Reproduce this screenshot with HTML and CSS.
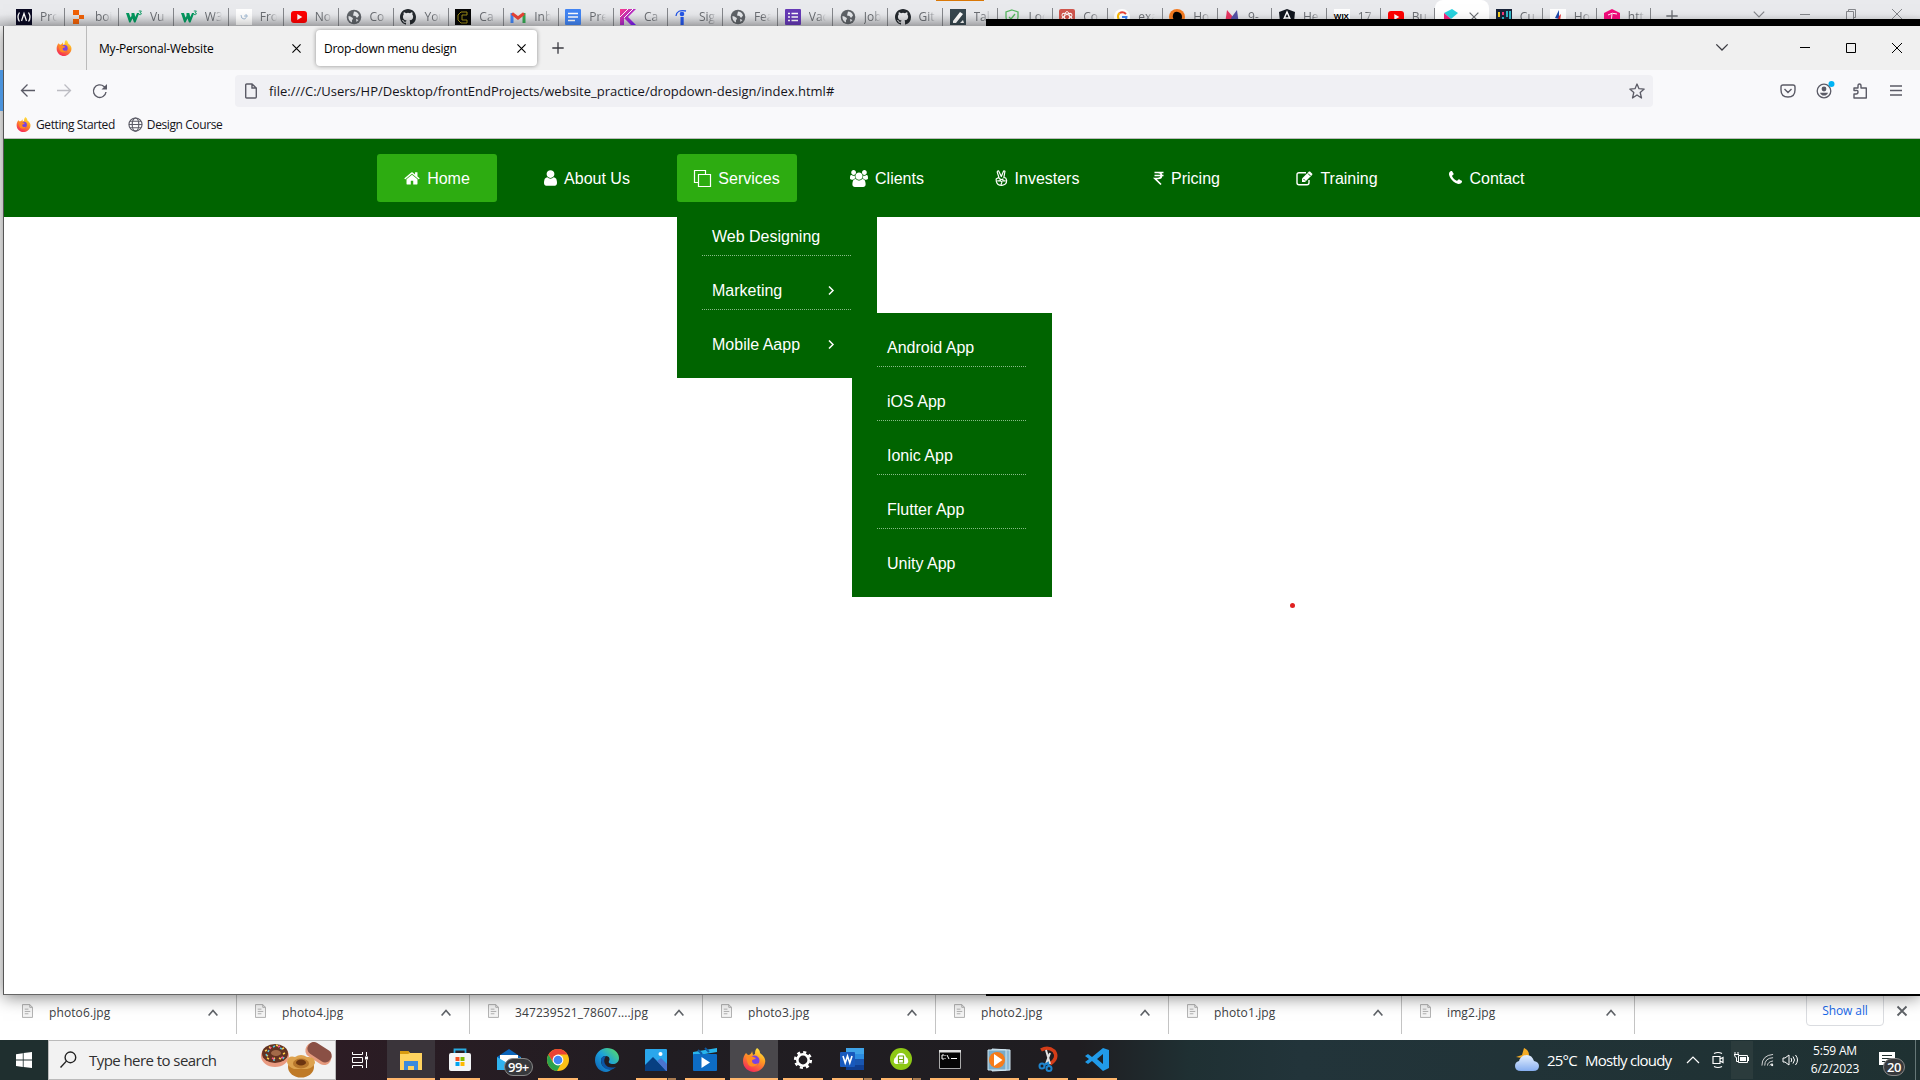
FILE: index.html
```html
<!DOCTYPE html>
<html lang="en">
<head>
<meta charset="utf-8">
<title>Drop-down menu design</title>
<link rel="stylesheet" href="styles.css">
</head>
<body>
<svg class="defs" aria-hidden="true">
  <defs>
    <linearGradient id="flame" x1="0.8" y1="0" x2="0.3" y2="1"><stop offset="0" stop-color="#fff04a"/><stop offset=".4" stop-color="#ffa020"/><stop offset="1" stop-color="#f5245a"/></linearGradient>
    <linearGradient id="edgeg" x1="0" y1="1" x2="1" y2="0"><stop offset="0" stop-color="#0c5cb0"/><stop offset=".5" stop-color="#1ba0dc"/><stop offset="1" stop-color="#5fe35c"/></linearGradient>
    <linearGradient id="kg" x1="0" y1="0" x2="1" y2="1"><stop offset="0" stop-color="#ff3d8a"/><stop offset="1" stop-color="#6a1bff"/></linearGradient>
    <linearGradient id="cloudg" x1="0" y1="0" x2="0" y2="1"><stop offset="0" stop-color="#e6f1ff"/><stop offset="1" stop-color="#86aef0"/></linearGradient>
    <symbol id="firefox" viewBox="0 0 24 24"><path d="M15 0c3 2 3 4 3 5 4 3 6 6 5 10-1 5-6 9-11 9S1 20 1 13c0-3 1-6 3-8l2 2c2 0 4-2 4-4l1 4 2-1c0-2 0-4 2-6z" fill="url(#flame)"/><circle cx="12.500" cy="12.500" r="5" fill="#7a42e0"/><path d="M4 9c4-3 7 0 10 1-1 2-4 1-4 3 0 3 4 4 6 2-1 4-8 5-10 1-1-2-1-4-2-7z" fill="#ff8a22"/></symbol>
    <symbol id="globe" viewBox="0 0 16 16"><circle cx="8" cy="8" r="7.300" fill="#5f6368"/><path d="M2.500 7C4 7 5 8 6 8.500c1.500.5 1 2 0 2.500v2.500C3.500 12.500 2 10 2.500 7zM8 2.500c2 0 4.500 1.500 5 4L11 9 9.500 7 7 6.500zm2 7.500 2.500 1-2 2z" fill="#e8eaed"/></symbol>
    <symbol id="github" viewBox="0 0 16 16"><path fill="#24292e" d="M8 0C3.580 0 0 3.580 0 8c0 3.540 2.290 6.530 5.470 7.590.4.070.55-.17.55-.38v-1.490c-2.010.37-2.530-.49-2.690-.94-.09-.23-.48-.94-.82-1.130-.28-.15-.68-.52-.01-.53.63-.01 1.080.58 1.230.82.72 1.210 1.870.87 2.330.66.07-.52.28-.87.51-1.070-1.780-.2-3.640-.89-3.640-3.950 0-.87.31-1.590.82-2.150-.08-.2-.36-1.020.08-2.120 0 0 .67-.21 2.200.82a7.600 7.600 0 0 1 4 0c1.530-1.040 2.200-.82 2.200-.82.44 1.100.16 1.920.08 2.120.51.560.82 1.270.82 2.150 0 3.070-1.870 3.750-3.650 3.950.29.25.54.73.54 1.480v2.190c0 .21.15.46.55.38A8 8 0 0 0 16 8c0-4.420-3.580-8-8-8z"/></symbol>
    <symbol id="youtube" viewBox="0 0 16 16"><rect y="2" width="16" height="12" rx="3" fill="#f00"/><path d="M6.300 5v6l5-3z" fill="#fff"/></symbol>
    <symbol id="w3" viewBox="0 0 16 16"><path d="M0 4h3l1.500 4.500L5.500 7V4h2.800l1 4L11 4h2.300L9.500 13.500H8L6.500 9.500l-2 4H3.200z" fill="#04995f"/><path d="M12.800 2h2.600l-1.300 1.800q1.600 0 1.200 1.300-.8 1-2.300.4" fill="none" stroke="#04995f" stroke-width=".9"/></symbol>
    <symbol id="x" viewBox="0 0 16 16"><path d="m3 3 10 10M13 3 3 13" fill="none" stroke="currentColor" stroke-width="1.400"/></symbol>
    <symbol id="plus" viewBox="0 0 16 16"><path d="M8 1.500v13M1.500 8h13" fill="none" stroke="currentColor" stroke-width="1.500"/></symbol>
    <symbol id="down" viewBox="0 0 16 16"><path d="m1.500 5 6.500 6.500L14.500 5" fill="none" stroke="currentColor" stroke-width="1.500"/></symbol>
    <symbol id="up" viewBox="0 0 16 16"><path d="m1 12 7-8 7 8" fill="none" stroke="currentColor" stroke-width="2.600"/></symbol>
    <symbol id="file" viewBox="0 0 12 15"><path d="M.5.5h8l3 3v11H.5z" fill="#f5f5f5" stroke="#aaa"/><path d="M8.500.5v3h3M3 5.500h4M3 8h6M3 10.500h4" fill="none" stroke="#aaa"/></symbol>
  </defs>
</svg>

<header class="back-tabs">
  <div class="tab"><svg viewBox="0 0 16 16"><path d="M0 0h16v16H0z" fill="#0a0a23"/><path d="M3.500 3.500Q.5 8 3.500 12.500M12.500 3.500q3 4.500 0 9M5.500 12 8 4.500l2.500 7.500" fill="none" stroke="#fff" stroke-width="1.300"/></svg><span>Pro</span></div>
  <div class="tab"><svg viewBox="0 0 16 16"><path d="M2 1h6v5H2zM8 6h5v4H8zM2 10h6v5H2z" fill="#f26207"/></svg><span>boi</span></div>
  <div class="tab"><svg><use href="#w3"/></svg><span>Vu</span></div>
  <div class="tab"><svg><use href="#w3"/></svg><span>W3</span></div>
  <div class="tab"><svg viewBox="0 0 16 16"><path d="M0 0h16v16H0z" fill="#fff"/><path d="M5 6q0 4 3 4t2-5m-2 2h4" fill="none" stroke="#a7bfd8"/></svg><span>Fro</span></div>
  <div class="tab"><svg><use href="#youtube"/></svg><span>No</span></div>
  <div class="tab"><svg><use href="#globe"/></svg><span>Co</span></div>
  <div class="tab"><svg><use href="#github"/></svg><span>You</span></div>
  <div class="tab"><svg viewBox="0 0 16 16"><path d="M0 0h16v16H0z" fill="#070707"/><path d="M12 5V3H6L3 6v5l3 3h6v-3H7V6h5z" fill="none" stroke="#9c8a16"/></svg><span>Ca</span></div>
  <div class="tab"><svg viewBox="0 0 16 16"><path d="M2 14V4" stroke="#4285f4" stroke-width="3"/><path d="M14 14V4" stroke="#34a853" stroke-width="3"/><path d="m2 4.500 6 4.500 6-4.500" fill="none" stroke="#ea4335" stroke-width="3"/></svg><span>Inb</span></div>
  <div class="tab"><svg viewBox="0 0 16 16"><rect width="16" height="16" rx="1" fill="#4285f4"/><path d="M3 4.500h10M3 8h10M3 11.500h7" stroke="#fff" stroke-width="1.500"/></svg><span>Pre</span></div>
  <div class="tab"><svg viewBox="0 0 16 16"><path d="M0 0h16L8 8l8 8h-5L4 9v7H0z" fill="url(#kg)"/><path d="M0 8 8 0M4 9l9-9" stroke="#fff"/></svg><span>Ca</span></div>
  <div class="tab"><svg viewBox="0 0 16 16"><circle cx="7" cy="5" r="2.300" fill="#2557e8"/><path d="M5.500 8h3.200v8H5.500z" fill="#2557e8"/><path d="M1 7q1-7 10-5" fill="none" stroke="#2557e8" stroke-width="1.300"/></svg><span>Sig</span></div>
  <div class="tab"><svg><use href="#globe"/></svg><span>Fea</span></div>
  <div class="tab"><svg viewBox="0 0 16 16"><rect width="16" height="16" rx="1" fill="#673ab7"/><path d="M3 4.500h2m1.500 0H13M3 8h2m1.500 0H13M3 11.500h2m1.500 0H13" stroke="#fff" stroke-width="1.600"/></svg><span>Vac</span></div>
  <div class="tab"><svg><use href="#globe"/></svg><span>Job</span></div>
  <div class="tab"><svg><use href="#github"/></svg><span>Git</span></div>
  <div class="tab"><svg viewBox="0 0 16 16"><path d="M0 0h16v16H0z" fill="#37474f"/><path d="m3 12 7-9 3 2-7 9H3zM10 14l3-3 1 3z" fill="#fff"/></svg><span>Tal</span></div>
  <div class="tab"><svg viewBox="0 0 16 16"><path d="m8 1 6 2v5q0 5-6 8-6-3-6-8V3zM5 8l2 2 4-5" fill="none" stroke="#58b860" stroke-width="1.300"/></svg><span>Loc</span></div>
  <div class="tab"><svg viewBox="0 0 16 16"><rect width="16" height="16" rx="2" fill="#d0564d"/><g fill="none" stroke="#fff" stroke-width=".9"><ellipse cx="8" cy="8" rx="2.500" ry="5.500"/><ellipse cx="8" cy="8" rx="2.500" ry="5.500" transform="rotate(60 8 8)"/><ellipse cx="8" cy="8" rx="2.500" ry="5.500" transform="rotate(120 8 8)"/></g></svg><span>Co</span></div>
  <div class="tab"><svg viewBox="0 0 16 16"><circle cx="8" cy="8" r="8" fill="#fff"/><path d="M12 5Q9 2 5.500 4" fill="none" stroke="#ea4335" stroke-width="2"/><path d="M5.500 4Q3 6.500 4.500 10" fill="none" stroke="#fbbc05" stroke-width="2"/><path d="M4.500 10q2 4 6 2" fill="none" stroke="#34a853" stroke-width="2"/><path d="M8 8h4.500q0 3-2 4" fill="none" stroke="#4285f4" stroke-width="2"/></svg><span>exa</span></div>
  <div class="tab"><svg viewBox="0 0 16 16"><circle cx="8" cy="8" r="8" fill="#f47b20"/><path d="M4 6q1-4 5-3t4 5q0 3-3 4v4H5l1-4Q3 9 4 6z"/></svg><span>Ho</span></div>
  <div class="tab"><svg viewBox="0 0 16 16"><path d="M1 15 3 1l6 7-4 8z" fill="#e83561"/><path d="m7 9 6-8 2 15-7-2z" fill="#5551a5"/></svg><span>9-</span></div>
  <div class="tab"><svg viewBox="0 0 16 16"><path d="m8 0 8 3-1 10-7 3-7-3L0 3z" fill="#10151d"/><path d="m4 12 4-9 4 9M6 9h4" fill="none" stroke="#fff" stroke-width="1.500"/></svg><span>He</span></div>
  <div class="tab narrow"><b class="wix">WIX</b><span>17</span></div>
  <div class="tab narrow"><svg><use href="#youtube"/></svg><span>Bu</span></div>
  <div class="tab narrow current"><svg viewBox="0 0 16 16"><path d="m1 4 8-4 6 4-7 6z" fill="#28d3df"/><path d="m1 4 7 6v6H1z" fill="#f0247c"/></svg><svg class="close"><use href="#x"/></svg></div>
  <div class="tab narrow"><svg viewBox="0 0 16 16"><path d="M0 0h16v16H0z" fill="#182338"/><path d="M3 3v5m0 4v4" stroke="#fbd21f" stroke-width="2"/><path d="M7 3v3m4 4v6" stroke="#f33a78" stroke-width="2"/><path d="M7 8v8M11 2v6m3-6v14" stroke="#35c9d8" stroke-width="1.800"/></svg><span>Cu</span></div>
  <div class="tab narrow"><svg viewBox="0 0 16 16"><path d="M0 0h16v16H0z" fill="#fff"/><path d="m9 1-4 8 4 1z" fill="#1d4cb0"/><path d="m9 7 2-2-1 7-3 2z" fill="#e33"/></svg><span>Ho</span></div>
  <div class="tab narrow"><svg viewBox="0 0 16 16"><path d="m8 0 8 4v8l-8 4-8-4V4z" fill="#f40b7c"/><path d="M4 6q4-3 9-1M8 5q0 5-2 8" fill="none" stroke="#fff"/></svg><span>htt</span></div>
  <svg class="add"><use href="#plus"/></svg>
  <div class="back-controls">
    <svg><use href="#down"/></svg>
    <svg viewBox="0 0 16 16"><path d="M3 8.500h10" stroke="currentColor"/></svg>
    <svg viewBox="0 0 16 16"><path d="M3.500 5.500h7v8h-7zM5.500 5V3.500h7v8H11" fill="none" stroke="currentColor"/></svg>
    <svg viewBox="0 0 16 16"><path d="m3 3 10 10M13 3 3 13" stroke="currentColor"/></svg>
  </div>
  <i class="orange-mark"></i>
</header>

<main class="window">
  <div class="titlebar">
    <div class="pinned"><svg><use href="#firefox"/></svg></div>
    <div class="ff-tab first"><span>My-Personal-Website</span><svg><use href="#x"/></svg></div>
    <div class="ff-tab active"><span class="t2">Drop-down menu design</span><svg><use href="#x"/></svg></div>
    <svg class="new"><use href="#plus"/></svg>
    <div class="controls">
      <svg class="list"><use href="#down"/></svg>
      <svg viewBox="0 0 16 16"><path d="M3 7.500h10" stroke="#000"/></svg>
      <svg viewBox="0 0 16 16"><path d="M3.500 3.500h9v9h-9z" fill="none" stroke="#000"/></svg>
      <svg viewBox="0 0 16 16"><path d="m3 3 10 10M13 3 3 13" stroke="#000"/></svg>
    </div>
  </div>
  <div class="toolbar">
    <div class="moves">
      <svg viewBox="0 0 16 16"><path d="M15 7.500H1.500M7.500 1.500l-6 6 6 6" fill="none" stroke="#5b5b66" stroke-width="1.300"/></svg>
      <svg viewBox="0 0 16 16"><path d="M1 7.500h13.500M8.500 1.500l6 6-6 6" fill="none" stroke="#bcbcc2" stroke-width="1.300"/></svg>
      <svg viewBox="0 0 16 16"><path d="M14 9a6.300 6.300 0 1 1-2-5.500l2 2" fill="none" stroke="#5b5b66" stroke-width="1.400"/><path d="M15 1v5.500H9.500z" fill="#5b5b66"/></svg>
    </div>
    <div class="url">
      <svg viewBox="0 0 16 16"><path d="M2.700 2q0-1 1-1H9l4.300 4v9q0 1-1 1H3.700q-1 0-1-1zM9 1v4h4" fill="none" stroke="#5b5b66" stroke-width="1.400"/></svg>
      <span>file:///C:/Users/HP/Desktop/frontEndProjects/website_practice/dropdown-design/index.html#</span>
      <svg viewBox="0 0 16 16"><path d="m8 1 2 4.700 5.200.4-4 3.400L12.500 15 8 12l-4.500 3 1.300-5.500-4-3.400L6 5.700z" fill="none" stroke="#5b5b66" stroke-width="1.300" stroke-linejoin="round"/></svg>
    </div>
    <div class="actions">
      <svg viewBox="0 0 16 16"><path d="M1 4q0-2 2-2h10q2 0 2 2v3q0 7-7 7T1 7zM4.500 6 8 9.500 11.500 6" fill="none" stroke="#5b5b66" stroke-width="1.400"/></svg>
      <svg viewBox="0 0 16 16"><circle cx="8" cy="8" r="6.800" fill="none" stroke="#5b5b66" stroke-width="1.300"/><circle cx="8" cy="6" r="2.400" fill="#5b5b66"/><path d="M4 9.700h8Q11 12.500 8 12.500t-4-2.800z" fill="#5b5b66"/><circle cx="15.500" cy="1" r="3" fill="#00b3f4"/></svg>
      <svg viewBox="0 0 16 16"><path d="M2 6V5h4V3q0-2 1.500-2T9 3v2h5.300v10H2v-4h2q2 0 2-2T4 7.500H2z" fill="none" stroke="#5b5b66" stroke-width="1.400" stroke-linejoin="round"/></svg>
      <svg viewBox="0 0 16 16"><path d="M2 3h12M2 7.500h12M2 12h12" stroke="#5b5b66" stroke-width="1.300"/></svg>
    </div>
  </div>
  <div class="bookmarks">
    <svg><use href="#firefox"/></svg><span>Getting Started</span>
    <svg class="world" viewBox="0 0 16 16"><g fill="none" stroke="#5b5b66" stroke-width="1.200"><circle cx="8" cy="8" r="7"/><ellipse cx="8" cy="8" rx="3.500" ry="7"/><path d="M1 8h14M2 4.500h12M2 11.500h12"/></g></svg><span class="t2">Design Course</span>
  </div>

  <div class="page">
    <nav class="menu-bar">
      <ul class="menu">
        <li><a class="on" href="#"><svg class="w16" viewBox="64 128 1664 1472"><path d="M1472 992v480q0 26-19 45t-45 19h-384v-384H768v384H384q-26 0-45-19t-19-45V992l1-6 575-474 575 474q1 2 1 6zm223-69-62 74q-8 9-21 11h-3q-13 0-21-7L896 424l-692 577q-12 8-24 7-13-2-21-11l-62-74q-8-10-7-23.500T101 878l719-599q32-26 76-26t76 26l244 204V288q0-14 9-23t23-9h192q14 0 23 9t9 23v408l219 182q10 8 11 21.500t-7 23.500z"/></svg><span>Home</span></a></li>
        <li><a href="#"><svg class="w13" viewBox="256 128 1280 1536"><path d="M1536 1399q0 109-62.500 187t-150.500 78H469q-88 0-150.500-78T256 1399q0-85 8.500-160.500t31.500-152 58.500-131 94-89T583 832q131 128 313 128t313-128q76 0 134.500 34.500t94 89 58.500 131 31.500 152 8.500 160.500zm-256-887q0 159-112.500 271.500T896 896 624.500 783.500 512 512t112.500-271.500T896 128t271.500 112.500T1280 512z"/></svg><span>About Us</span></a></li>
        <li><a class="on" href="#"><svg class="w17" viewBox="0 0 17 17"><path d="M4.500 12.500h-4V.5h11v4M4.500 4.500h12v12h-12z" fill="none" stroke="#fff" stroke-width="1.200"/></svg><span>Services</span></a>
          <ul class="sub">
            <li><a href="#">Web Designing</a></li>
            <li><a href="#">Marketing<svg viewBox="0 0 6 9"><path d="m1 .5 4 4-4 4" fill="none" stroke="#fff" stroke-width="1.500"/></svg></a></li>
            <li><a href="#">Mobile Aapp<svg viewBox="0 0 6 9"><path d="m1 .5 4 4-4 4" fill="none" stroke="#fff" stroke-width="1.500"/></svg></a>
              <ul class="sub nested">
                <li><a href="#">Android App</a></li>
                <li><a href="#">iOS App</a></li>
                <li><a href="#">Ionic App</a></li>
                <li><a href="#">Flutter App</a></li>
                <li><a href="#">Unity App</a></li>
              </ul>
            </li>
          </ul>
        </li>
        <li><a href="#"><svg class="w18" viewBox="0 0 1920 1792"><path d="M593 896q-162 5-265 128H194q-82 0-138-40.500T0 865q0-353 124-353 6 0 43.500 21t97.500 42.500T384 597q67 0 133-23-5 37-5 66 0 159 81 256zm1071 637q0 120-73 189.500t-194 69.500H523q-121 0-194-69.500T256 1533q0-53 3.500-103.500t14-109T300 1212t43-97.500 62-81 85.500-53.500T602 960q10 0 43 21.500t73 48 107 48 135 21.500 135-21.500 107-48 73-48 43-21.500q61 0 111.500 20t85.500 53.500 62 81 43 97.500 26.500 108.500 14 109 3.500 103.500zM640 256q0 106-75 181t-181 75-181-75-75-181 75-181T384 0t181 75 75 181zm704 384q0 159-112.500 271.500T960 1024 688.500 911.500 576 640t112.500-271.500T960 256t271.500 112.500T1344 640zm576 225q0 78-56 118.500t-138 40.500h-134q-103-123-265-128 81-97 81-256 0-29-5-66 66 23 133 23 59 0 119-21.500t97.500-42.500 43.500-21q124 0 124 353zm-128-609q0 106-75 181t-181 75-181-75-75-181 75-181 181-75 181 75 75 181z"/></svg><span>Clients</span></a></li>
        <li><a href="#"><svg class="w13" viewBox="0 0 13 17"><path d="m4 8.500-2-6Q1.800.8 3.500 1L6.300 7 8.500 1.500q.5-1 1.700-.2L9 8l2 .5 1 2.500q0 5-5 5.300Q2 16.500 1 12L.8 9.500 3 8.300l2 1v2l-3 .3m3-1 3-1M5 11.500l2 1-1 3M8 9v2.500h3" fill="none" stroke="#fff" stroke-width="1.250" stroke-linejoin="round"/></svg><span>Investers</span></a></li>
        <li><a href="#"><svg class="w10" viewBox="0 0 10 14"><path d="M.5 1.500h9M.5 4.500h9M1 1.500h3q3.500 0 3.500 3T4 7.500H1L7 13.500" fill="none" stroke="#fff" stroke-width="1.700"/></svg><span>Pricing</span></a></li>
        <li><a href="#"><svg class="w17" viewBox="0 0 17 15"><path d="M10 1.700H3Q1 1.700 1 3.700v8q0 2 2 2h8q2 0 2-2V9" fill="none" stroke="#fff" stroke-width="1.400"/><path d="m6 7.500 7-7h1l2.300 2.300v1L9 11H6z"/><path d="m7.500 8 1.500 1.500M12 2.500 14.500 5" stroke="#006400"/></svg><span>Training</span></a></li>
        <li><a href="#"><svg class="w13" viewBox="192 256 1408 1280"><path d="M1600 1240q0 27-10 70.500t-21 68.500q-21 50-122 106-94 51-186 51-27 0-52.500-3.500t-57.500-12.500-47.500-14.500T1048 1485t-49-18q-98-35-175-83-128-79-264.500-215.500T344 904q-48-77-83-175-3-9-18-49t-20.500-55.500T208 577t-12.500-57.500T192 467q0-92 51-186 56-101 106-122 25-11 68.500-21t70.500-10q14 0 21 3 18 6 53 76 11 19 30 54t35 63.500 31 53.500q3 4 17.500 25t21.500 35.500 7 28.500q0 20-28.500 50t-62 55-62 53-28.500 46q0 9 5 22.500t8.500 20.500 14 24 11.500 19q76 137 174 235t235 174q2 1 19 11.500t24 14 20.500 8.500 22.500 5q18 0 46-28.500t53-62 55-62 50-28.500q14 0 28.500 7t35.500 21.500 25 17.500q25 15 53.500 31t63.500 35 54 30q70 35 76 53 3 7 3 21z"/></svg><span>Contact</span></a></li>
      </ul>
    </nav>
    <i class="dot"></i>
  </div>
</main>

<section class="downloads">
  <div class="dl"><svg class="doc"><use href="#file"/></svg><span>photo6.jpg</span><svg class="up"><use href="#up"/></svg></div>
  <div class="dl"><svg class="doc"><use href="#file"/></svg><span>photo4.jpg</span><svg class="up"><use href="#up"/></svg></div>
  <div class="dl"><svg class="doc"><use href="#file"/></svg><span>347239521_78607....jpg</span><svg class="up"><use href="#up"/></svg></div>
  <div class="dl"><svg class="doc"><use href="#file"/></svg><span>photo3.jpg</span><svg class="up"><use href="#up"/></svg></div>
  <div class="dl"><svg class="doc"><use href="#file"/></svg><span>photo2.jpg</span><svg class="up"><use href="#up"/></svg></div>
  <div class="dl"><svg class="doc"><use href="#file"/></svg><span>photo1.jpg</span><svg class="up"><use href="#up"/></svg></div>
  <div class="dl"><svg class="doc"><use href="#file"/></svg><span>img2.jpg</span><svg class="up"><use href="#up"/></svg></div>
  <button class="show-all">Show all</button>
  <svg class="dismiss" viewBox="0 0 10 10"><path d="m.5.5 9 9M9.500.5l-9 9" stroke="#5f6368" stroke-width="1.800"/></svg>
</section>

<footer class="taskbar">
  <div class="start"><svg viewBox="0 0 16 16"><path d="M0 2.200 6.800 1.200v6.400H0zM7.600 1.100 16 0v7.600H7.600zM0 8.400h6.800v6.500L0 13.900zM7.600 8.400H16V16l-8.400-1.100z" fill="#fff"/></svg></div>
  <div class="search">
    <svg class="lens" viewBox="0 0 16 16"><circle cx="9.800" cy="6" r="5" fill="none" stroke="#222" stroke-width="1.300"/><path d="m6 9.500-5.500 6" stroke="#222" stroke-width="1.300"/></svg>
    <span>Type here to search</span>
    <svg class="donuts" viewBox="0 0 72 36"><ellipse cx="14" cy="14" rx="14" ry="11" fill="#e99a80"/><ellipse cx="14" cy="11.500" rx="13" ry="9.500" fill="#633322"/><ellipse cx="15" cy="11" rx="5" ry="3" fill="#a36a48"/><path d="m4 9 2-1m2-3 2 1m5-3 2 1m4 3 2-1m1 5-2 1m-4 4 2 1m-8 0 2-1m-8 0 2 1M5 13l2 1" stroke="#ffcf48" stroke-width="1.500"/><path d="m7 10 1-2m4-3 2-1m5 2 2 1m2 8-1 2m-8 1h-2m-6-4-1-2" stroke="#56c2dd" stroke-width="1.500"/><path d="m9 7 1-2m7 0 2-1m-8 12 2 1m7-1 2-1" stroke="#f45a8c" stroke-width="1.500"/><g transform="rotate(33 58 11)"><rect x="44" y="4.500" width="28" height="15" rx="7" fill="#e59a7d"/><rect x="45" y="3.500" width="26" height="13" rx="6" fill="#8a5045"/></g><ellipse cx="40" cy="25" rx="13" ry="10.500" fill="#bf7a27"/><path d="M26 20q1-7 8-5 6-4 12 0 8-1 8 6-2 5-8 6H33q-6-2-7-7z" fill="#dda24e"/><ellipse cx="40" cy="21.500" rx="8" ry="5" fill="#b8772c"/><ellipse cx="40" cy="20.500" rx="5" ry="3" fill="#6d3510"/></svg>
  </div>
  <div class="task-view"><svg viewBox="0 0 17 16"><path d="M.5 0v2.500h10V0M.5 16v-2.500h10V16M.5 5.500h10v5H.5zM14.500 0v4m0 4v8" fill="none" stroke="#fff"/><path d="M13 4.500h3v3h-3z" fill="#fff"/></svg></div>
  <div class="apps">
    <div class="app full lit"><svg viewBox="0 0 24 24"><path d="M1 3h8l2 2h12v17H1z" fill="#ffd35f"/><path d="M1 3h8l2 2-2 1H1z" fill="#d99a10"/><path d="M5 13h14v9h-4v-4H9v4H5z" fill="#3c8bdb"/></svg></div>
    <div class="app run"><svg viewBox="0 0 24 24"><path d="M6.500 6V1.500h11V6" fill="none" stroke="#29abe2" stroke-width="1.800"/><rect x="1" y="5" width="22" height="18" rx="2" fill="#f3f5f7"/><path d="M7.500 9h4v4h-4z" fill="#f25022"/><path d="M12.500 9h4v4h-4z" fill="#7fba00"/><path d="M7.500 14h4v4h-4z" fill="#00a4ef"/><path d="M12.500 14h4v4h-4z" fill="#ffb900"/></svg></div>
    <div class="app"><svg viewBox="0 0 24 24"><path d="m0 9 12-8 12 8v13H0z" fill="#0a64ba"/><path d="M3 7h18v8H3z" fill="#fff"/><path d="m0 9 12 7 12-7v13H0z" fill="#30b3ef"/></svg><b class="badge mail">99+</b></div>
    <div class="app run"><svg viewBox="0 0 24 24"><circle cx="12" cy="12" r="11" fill="#fbc116"/><path d="M2.500 6.500A11 11 0 0 1 21.500 6.500H12L7 14z" fill="#ea4335"/><path d="M2.500 6.500A11 11 0 0 0 11 23l5-9-9 .5z" fill="#2ba24c"/><circle cx="12" cy="12" r="5.400" fill="#fff"/><circle cx="12" cy="12" r="4.300" fill="#4285f4"/></svg></div>
    <div class="app"><svg viewBox="0 0 24 24"><path d="M0 12C0 5 6 0 12 0s12 4 12 10c0 4-3 6-6 6-3 0-5-1-4-3 1-1 1-5-3-5-3 0-5 2-5 5 0 6 6 9 11 8-2 2-4 3-6 3C5 24 0 19 0 12z" fill="url(#edgeg)"/><path d="M6 12q0 9 9 10 3 0 6-3-8 2-11-3-2-4 1-8-5 0-5 4z" fill="#0b55a5"/></svg></div>
    <div class="app run multi"><svg viewBox="0 0 24 24"><rect x="1" y="1" width="22" height="22" rx="1" fill="#2aa7ec"/><path d="M1 17 9 9l14 14H1z" fill="#073f82"/><path d="m13 13 4-3 6 6v7h-1z" fill="#4a73ce"/><circle cx="16.500" cy="6" r="2" fill="#fff"/></svg></div>
    <div class="app run"><svg viewBox="0 0 24 24"><path d="m0 4 24-4v4L0 8z" fill="#28b5ed"/><rect y="6" width="24" height="17" rx="1" fill="#0d6cc4"/><path d="m5 2 4 4m3-6 4 4" stroke="#115aa0" stroke-width="2"/><path d="M8.500 9v11l8.500-5.500z" fill="#fff"/></svg></div>
    <div class="app full focus"><svg><use href="#firefox"/></svg></div>
    <div class="app run"><svg viewBox="0 0 24 24"><g fill="none" stroke="#fff"><circle cx="12" cy="12" r="5.700" stroke-width="2.600"/><circle cx="12" cy="12" r="7.800" stroke-width="2.600" stroke-dasharray="3.060 3.060"/></g></svg></div>
    <div class="app run multi"><svg viewBox="0 0 24 24"><rect x="6" width="18" height="22" rx="1" fill="#2c8ce0"/><path d="M6 0h18v6H6z" fill="#3fa3e8"/><path d="M6 11h18v6H6z" fill="#1956b0"/><path d="M6 17h18v5H6z" fill="#103f91"/><rect y="4" width="15" height="15" rx="1" fill="#1859bd"/><path d="m3 8 2.200 7L7.500 8l2.300 7L12 8" fill="none" stroke="#fff" stroke-width="1.600"/></svg></div>
    <div class="app run multi"><svg viewBox="0 0 24 24"><circle cx="12" cy="11" r="11" fill="#8ec916"/><path d="M7 16q-3-1-2-4 0-2 2-3 1-4 5-4t5 4q2 1 2 3 1 3-2 4z" fill="#fff"/><path d="M9.500 8h5v7h-5zm0 3.500h5" fill="none" stroke="#71a90c" stroke-width="1.200"/></svg></div>
    <div class="app run"><svg viewBox="0 0 24 24"><path d="M1.500 2.500h21v18h-21z" fill="#050505" stroke="#aaa"/><path d="M1 2h22v2.500H1z" fill="#e0e0e0"/><path d="M6 7H4v4h2m1-4v1m0 2v1m2-4 2 4m2-.5h6" fill="none" stroke="#fff"/></svg></div>
    <div class="app run"><svg viewBox="0 0 24 24"><path d="m5 1 18 1v20L5 23z" fill="#8cb9d5" stroke="#d5e8f3"/><path d="M1 2h18v20H1z" fill="#79abc9" stroke="#cfe7f2"/><circle cx="10" cy="12" r="8" fill="#f67b19"/><path d="M7 6v12l8.500-6z" fill="#fff"/></svg></div>
    <div class="app run"><svg viewBox="0 0 24 24"><path d="M5 2q7-4 13 1 5 7-4 13" fill="none" stroke="#d43d18" stroke-width="3.500"/><path d="m10 2 4 14M14 5l-4 11" stroke="#e2e2e2" stroke-width="2"/><g fill="none" stroke="#1f85ce" stroke-width="2"><circle cx="6" cy="18" r="2.500"/><circle cx="13" cy="20.500" r="2.500"/><path d="m8 17 4-2 1 3"/></g></svg></div>
    <div class="app run"><svg viewBox="0 0 24 24"><path d="m18 0 6 2v18l-6 3L7 13l-4 3-3-2 4-3-4-3 3-2 4 3zM18 6l-6 5 6 5z" fill="#219be9" fill-rule="evenodd"/></svg></div>
  </div>
  <div class="tray">
    <svg class="weather" viewBox="0 0 24 24"><path d="M9 0q5 2 5 7-2 7-10 5l3-2-6-1 6-2z" fill="#f5ac25"/><path d="M6 23q-6 0-6-5 0-4 4-5 2-6 8-6 5 0 7 6 5 1 5 5 0 5-6 5z" fill="url(#cloudg)"/></svg>
    <span class="temp">25°C</span><span class="sky">Mostly cloudy</span>
    <svg class="caret" viewBox="0 0 12 12"><path d="m0 9 6-6 6 6" fill="none" stroke="#fff" stroke-width="1.200"/></svg>
    <svg class="meet" viewBox="0 0 12 16"><path d="M2 1.500q4-2 8 0M2 14.500q4 2 8 0M1 4.500h7v7H1zM8 7l3-1.500v5L8 9" fill="none" stroke="#fff" stroke-width="1.200"/></svg>
    <div class="battery"><svg viewBox="0 0 17 14"><path d="M5.500 3.500h9v7h-9zM15.500 5v4M1 2.500h5M2 0v3m3-3v3M1.500 2.500q0 3 2 3v4h2" fill="none" stroke="#fff"/><path d="M7 5h6v4H7z" fill="#fff"/></svg></div>
    <svg class="wifi" viewBox="0 0 14 14"><path d="M1 13Q1 2 13 1M4 13q0-8 9-8.500M7 13q0-4 6-5M9.500 13q.5-2 3-2" fill="none" stroke="#ddd"/><circle cx="12" cy="12.500" r="1.200" fill="#fff"/></svg>
    <svg class="sound" viewBox="0 0 17 14"><path d="M1 5v4h2l4 3V2L3 5zM9 5q1.500 2 0 4M11 3.500q3 3.500 0 7M13.500 2q4 5 0 10" fill="none" stroke="#fff"/></svg>
    <div class="clock"><span>5:59 AM</span><span>6/2/2023</span></div>
    <div class="notes"><svg viewBox="0 0 16 16"><path d="M0 0h16v13h-5v3l-3-3H0z" fill="#fff"/><path d="M3 3.500h10M3 6.500h10M3 9.500h6" stroke="#20302f"/></svg><b class="badge">20</b></div>
  </div>
</footer>
</body>
</html>
```
FILE: styles.css
```css
* { box-sizing: border-box; }
body {
  margin: 0;
  width: 1920px;
  height: 1080px;
  overflow: hidden;
  display: flex;
  flex-direction: column;
  background: #fff;
  font-family: "Open Sans", "Noto Sans", sans-serif;
  font-size: 12px;
  color: #15141a;
}
svg { display: block; flex: none; overflow: visible; }
.defs { position: absolute; width: 0; height: 0; }

.back-tabs {
  position: relative;
  display: flex;
  height: 26px;
  padding-left: 9.600px;
  background: linear-gradient(#e9eaed 55%, #c9cacd);
  color: #6b6e73;
  overflow: hidden;
}
.back-tabs::after {
  content: "";
  position: absolute;
  left: 986px;
  right: 0;
  top: 19px;
  height: 7px;
  background: #000;
}
.tab {
  width: 54.920px;
  height: 26px;
  flex: none;
  display: flex;
  align-items: flex-start;
  padding: 9px 0 0 6.500px;
  background: linear-gradient(#85878b, #85878b) right 8px / 1px 18px no-repeat;
}
.tab svg { width: 16px; height: 16px; margin-right: 8px; }
.tab span {
  width: 17px;
  line-height: 16px;
  overflow: hidden;
  white-space: nowrap;
  -webkit-mask-image: linear-gradient(90deg, #000 50%, transparent);
  mask-image: linear-gradient(90deg, #000 50%, transparent);
}
.narrow { width: 54px; }
.wix { width: 16px; margin-right: 8px; background: #fff; color: #000; font: bold 8px/16px "Liberation Sans", sans-serif; }
.current { background: #fff; border-radius: 8px 8px 0 0; padding-left: 8px; }
.current .close { width: 14px; height: 14px; margin-top: 1px; stroke-width: 2; }
.add { width: 14px; height: 14px; margin: 9px 0 0 14px; }
.back-controls { margin-left: auto; display: flex; gap: 30px; padding: 6px 15px 0 0; color: #85878b; }
.back-controls svg { width: 16px; height: 16px; }
.back-controls svg:first-child { transform: scale(.8); }
.orange-mark { position: absolute; left: 936px; top: 0; width: 48px; height: 1px; background: #d97706; }

.window {
  position: relative;
  z-index: 1;
  height: 969px;
  margin-left: 3px;
  border-left: 1px solid #555;
  border-bottom: 1px solid #666;
  box-shadow: 0 2px 16px rgba(0, 0, 0, .5);
  background: #fff;
}
.window::before {
  content: "";
  position: absolute;
  left: -4px;
  top: 44px;
  width: 3px;
  height: 41px;
  background: #4b93dc;
}
.window::after {
  content: "";
  position: absolute;
  left: 982px;
  right: 0;
  bottom: -2px;
  height: 2px;
  background: #000;
}
.titlebar { display: flex; align-items: center; height: 44px; background: #f0f0f0; color: #3b3b42; }
.pinned { width: 83px; height: 44px; padding: 14px 0 0 52px; border-right: 1px solid #bbb; }
.pinned svg { width: 16px; height: 16px; }
.ff-tab { display: flex; align-items: center; justify-content: space-between; height: 36px; color: #000; letter-spacing: -.200px; }
.ff-tab span { padding-top: 1px; }
.ff-tab .t2 { letter-spacing: -.300px; }
.ff-tab svg { width: 13px; height: 13px; }
.first { width: 229px; padding: 0 13px 0 12px; }
.active { width: 221px; padding: 0 9px 0 8px; background: #fff; border-radius: 4px; box-shadow: 0 0 4px rgba(0, 0, 0, .4); }
.new { width: 14px; height: 14px; margin-left: 14px; }
.controls { margin-left: auto; display: flex; gap: 30px; padding-right: 15px; }
.controls svg { width: 16px; height: 16px; }
.controls .list { width: 14px; height: 14px; margin-right: 38px; }

.toolbar { display: flex; align-items: center; height: 40px; padding: 2px 16px 0 16px; background: #f9f9fb; }
.moves { display: flex; gap: 20px; width: 215px; }
.moves svg { width: 16px; height: 16px; }
.url { display: flex; align-items: center; width: 1418px; height: 32px; padding: 0 8px 0 8px; background: #f0f0f4; border-radius: 4px; font-size: 13px; }
.url svg { width: 16px; height: 16px; margin-top: -1px; }
.url span { margin: 0 auto 0 10px; letter-spacing: 0; }
.actions { display: flex; gap: 20px; margin-left: auto; }
.actions svg { width: 16px; height: 16px; margin-top: -1px; }
.bookmarks { display: flex; align-items: center; height: 29px; padding-left: 12px; background: #f9f9fb; border-bottom: 1px solid #bbb; }
.bookmarks svg { width: 15px; height: 15px; margin-right: 5px; }
.bookmarks .world { margin-left: 13px; margin-right: 4px; }
.bookmarks span { letter-spacing: -.400px; white-space: nowrap; }

.page { position: relative; font-family: "Liberation Sans", Arial, sans-serif; font-size: 16px; }
.menu-bar { height: 78px; background: #006400; }
.menu, .sub { list-style: none; margin: 0; padding: 0; }
.menu { display: flex; width: 1200px; margin: 0 auto; padding-top: 15px; }
.menu > li { position: relative; width: 150px; padding: 0 15px; }
.menu a { color: #fff; text-decoration: none; }
.menu > li > a { display: flex; align-items: center; justify-content: center; gap: 7px; height: 48px; border-radius: 3px; }
.menu > li > a span { padding-top: 2px; }
.menu > li > a.on { background: #2dac11; }
.menu > li > a svg { fill: #fff; }
.w10 { width: 10px; height: 14px; }
.w13 { width: 13px; height: 16px; }
.w16 { width: 16px; height: 14px; }
.w17 { width: 17px; height: 17px; }
.w18 { width: 18px; height: 17px; }
.sub { position: absolute; left: 15px; top: 63px; width: 200px; height: 161px; padding: 0 26px 0 25px; background: #006400; }
.sub > li { height: 54px; }
.sub > li:first-child { height: 39px; }
.sub > li > a { display: flex; align-items: flex-end; justify-content: space-between; height: 100%; padding: 0 17px 9px 10px; line-height: 18px; border-bottom: 1px dotted #8b8; }
.sub > li:last-child > a { border-bottom: 0; padding-bottom: 10px; }
.sub a svg { width: 6px; height: 9px; margin-bottom: 5px; }
.nested { left: 175px; top: 96px; height: 284px; }
.sub > .nested > li:first-child, .nested > li:first-child { height: 54px; }
.dot { position: absolute; left: 1286px; top: 464px; width: 5px; height: 5px; border-radius: 50%; background: #e02020; }

.downloads { display: flex; height: 45px; padding-left: 4px; background: #fff; }
.dl { width: 233px; height: 39px; display: flex; align-items: center; padding: 0 18px 4px 18px; border-right: 1px solid #c4c4c4; color: #3c4043; letter-spacing: .100px; }
.doc { width: 11px; height: 14px; margin: -4px 16px 0 0; }
.up { width: 10px; height: 10px; margin-left: auto; color: #5f6368; }
.show-all { width: 78px; height: 40px; margin: -9px 0 0 171px; padding: 8px 0 0; border: 1px solid #dadce0; border-radius: 4px; background: #fff; color: #1967e8; font: 12px "Open Sans", sans-serif; letter-spacing: -.100px; }
.dismiss { width: 10px; height: 10px; margin: 11px 0 0 13px; }

.taskbar {
  position: relative;
  z-index: 2;
  display: flex;
  height: 40px;
  color: #fff;
  background: linear-gradient(90deg, #1f2f2f 0 48px, #2c1c24 330px, #211d22 640px, #1f1d21 1080px, #1f3033 1190px, #22343a 1300px, #1f3132);
}
.start { width: 48px; padding: 12px 16px; }
.start svg { width: 16px; height: 16px; }
.search { display: flex; align-items: center; width: 288px; background: #f2f2f2; border: 1px solid #bbb; color: #303030; font-size: 15px; }
.lens { width: 17px; height: 17px; margin: -2px 12px 0 11px; }
.search span { width: 172px; letter-spacing: -.560px; white-space: nowrap; }
.donuts { width: 72px; height: 36px; }
.task-view { width: 51px; padding: 12px 0 0 16px; }
.task-view svg { width: 17px; height: 16px; }
.apps { display: flex; gap: 9px; }
.app { position: relative; width: 40px; height: 40px; display: flex; justify-content: center; padding-top: 8px; }
.app svg { width: 24px; height: 24px; }
.app.full { width: 48px; margin: 0 -4px; }
.app.full:first-child { margin: 0 -4px 0 0; }
.run, .full { border-bottom: 2px solid #ffb66c; }
.lit { background: #3a343a; }
.focus { background: #4a484c; }
.multi::after { content: ""; position: absolute; right: 0; bottom: -2px; width: 8px; height: 2px; background: #a97b50; border-left: 1px solid #333; }
.badge { position: absolute; padding: 0 3px; border: 1px solid #888; border-radius: 10px; background: #37393c; font-size: 13px; line-height: 16px; font-weight: 600; letter-spacing: -.500px; }
.mail { left: 15px; top: 18px; }
.tray { display: flex; align-items: center; margin-left: auto; padding-right: 4px; height: 40px; font-size: 15px; white-space: nowrap; }
.weather { width: 24px; height: 24px; }
.temp { width: 38px; margin-left: 8px; letter-spacing: -.800px; }
.sky { width: 102px; letter-spacing: -.750px; }
.caret { width: 12px; height: 12px; margin-right: 13px; }
.meet { width: 12px; height: 16px; margin-right: 7px; }
.battery { width: 22px; height: 38px; padding: 11px 2px; background: #2b3b3c; }
.battery svg { width: 17px; height: 14px; }
.wifi { width: 13px; height: 14px; margin-left: 8px; }
.sound { width: 17px; height: 14px; margin-left: 8px; }
.clock { width: 72px; display: flex; flex-direction: column; align-items: center; font-size: 12px; line-height: 18px; letter-spacing: -.200px; }
.notes { position: relative; width: 45px; height: 40px; padding: 12px 0 0 8px; border-right: 1px solid #677; }
.notes svg { width: 16px; height: 16px; }
.notes .badge { left: 12px; top: 18px; }
```
